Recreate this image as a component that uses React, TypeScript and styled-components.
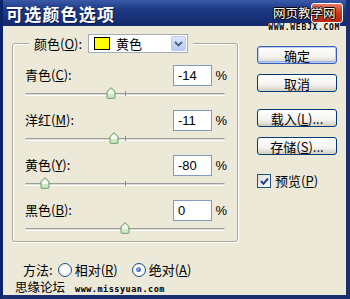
import React from 'react';
import styled, { createGlobalStyle } from 'styled-components';

const GlobalStyle = createGlobalStyle`
    html, body {
        margin: 0;
        padding: 0;
        background: #ece9d8;
    }
    body {
        font-family: "Liberation Sans", "Noto Sans CJK SC", sans-serif;
        font-size: 13px;
        color: #000;
    }
`;

const Window = styled.div`
    width: 350px;
    height: 299px;
    box-sizing: border-box;
    background: #ece9d8;
    border-left: 3px solid #0a246a;
    border-right: 4px solid #1a2f6e;
    border-bottom: 4px solid #1a2f6e;
    display: flex;
    flex-direction: column;
    position: relative;
    overflow: hidden;
`;

const TitleBar = styled.div`
    height: 26px;
    margin: 0 -4px 0 -3px;
    background: linear-gradient(180deg, #3a5aa8 0%, #1d3a86 35%, #14296b 100%);
    display: flex;
    align-items: center;
    padding-left: 6px;
    position: relative;
`;

const Title = styled.span`
    color: #fff;
    font-family: "Noto Sans CJK SC", sans-serif;
    font-weight: 700;
    font-size: 17px;
    letter-spacing: 1.2px;
    text-shadow: 1px 1px 0 #0a1a50;
`;

const CloseButton = styled.div`
    position: absolute;
    right: 7px;
    top: 3px;
    width: 30px;
    height: 18px;
    border-radius: 3px;
    border: 1px solid #fff;
    background: linear-gradient(180deg, #e8776a 0%, #d0341c 50%, #b8260e 100%);
`;

const Watermark = styled.div`
    position: absolute;
    right: 10px;
    top: 5px;
    display: flex;
    flex-direction: column;
    align-items: center;
    z-index: 2;
`;

const WatermarkTitle = styled.span`
    font-family: "Noto Sans CJK SC", sans-serif;
    font-size: 12.5px;
    line-height: 16px;
    color: #fff;
    text-shadow: 1px 0 0 #000, -1px 0 0 #000, 0 1px 0 #000, 0 -1px 0 #000;
`;

const WatermarkUrl = styled.span`
    font-family: "DejaVu Sans Mono", monospace;
    font-size: 8px;
    font-weight: 700;
    line-height: 9px;
    letter-spacing: 0.7px;
    color: #000;
    margin-top: 2px;
    background: #ece9d8;
`;

const Body = styled.div`
    flex: 1;
    display: flex;
    padding: 8px 0 0 9px;
    gap: 19px;
`;

const LeftColumn = styled.div`
    display: flex;
    flex-direction: column;
    width: 226px;
`;

const GroupBox = styled.div`
    margin-top: 9px;
    border: 1px solid #aca899;
    border-radius: 3px;
    box-shadow: 1px 1px 0 #fff inset, 1px 1px 0 #fff;
    height: 199px;
    position: relative;
    padding: 20px 12px 0 12px;
    box-sizing: border-box;
`;

const Legend = styled.div`
    position: absolute;
    top: -10px;
    left: 16px;
    display: flex;
    align-items: center;
    gap: 6px;
    padding: 0 5px;
    background: #ece9d8;
`;

const Label = styled.span`
    font-family: "Noto Sans CJK SC", sans-serif;
    font-size: 13px;
    line-height: 16px;
    white-space: nowrap;
`;

const Mnemonic = styled.span`
    text-decoration: underline;
    text-underline-offset: 1px;
`;

const Select = styled.div`
    width: 100px;
    height: 19px;
    border: 1px solid #a5acb5;
    background: #fff;
    display: flex;
    align-items: center;
    box-sizing: border-box;
    padding-left: 5px;
`;

const Swatch = styled.div<{ $color: string }>`
    width: 14px;
    height: 11px;
    border: 1px solid #000;
    background: ${p => p.$color};
    margin-right: 6px;
`;

const SelectText = styled.span`
    font-family: "Noto Sans CJK SC", sans-serif;
    font-size: 13px;
    flex: 1;
`;

const DropButton = styled.div`
    width: 15px;
    height: 15px;
    margin-right: 1px;
    border-radius: 2px;
    background: linear-gradient(180deg, #dbe5fc 0%, #b7c9f5 100%);
    border: 1px solid #b9cbf3;
    box-sizing: border-box;
    display: flex;
    align-items: center;
    justify-content: center;
`;

const Row = styled.div`
    display: flex;
    flex-direction: column;
    height: 45px;
`;

const RowTop = styled.div`
    display: flex;
    align-items: center;
    height: 22px;
`;

const Spacer = styled.div`
    flex: 1;
`;

const NumberInput = styled.div`
    width: 39px;
    height: 21px;
    box-sizing: border-box;
    border: 1px solid #7f9db9;
    background: #fff;
    display: flex;
    align-items: center;
    padding-left: 4px;
    font-family: "Liberation Sans", sans-serif;
    font-size: 13px;
`;

const Percent = styled.span`
    font-family: "Liberation Sans", sans-serif;
    font-size: 13px;
    width: 15px;
    text-align: right;
    margin-right: -2px;
`;

const Track = styled.div`
    position: relative;
    height: 3px;
    margin-top: 7px;
    width: 200px;
    border-top: 1px solid #9d9d9d;
    border-bottom: 1px solid #fff;
    background: #dcdcd4;
    border-radius: 2px;
    box-sizing: border-box;
`;

const Tick = styled.div`
    position: absolute;
    left: 100px;
    top: -3px;
    width: 1px;
    height: 5px;
    background: #8a8a8a;
`;

const Thumb = styled.svg`
    position: absolute;
    top: -7px;
    width: 10px;
    height: 12px;
    margin-left: -5px;
`;

const MethodRow = styled.div`
    display: flex;
    align-items: center;
    height: 15px;
    margin-top: 20px;
    padding-left: 11px;
    gap: 3px;
`;

const Radio = styled.div<{ $checked?: boolean }>`
    width: 12px;
    height: 12px;
    border-radius: 50%;
    border: 1px solid #1c5180;
    background: radial-gradient(circle, #fff 40%, #e0ded5 100%);
    display: flex;
    align-items: center;
    justify-content: center;
    margin-left: 2px;

    &::after {
        content: '';
        display: ${p => (p.$checked ? 'block' : 'none')};
        width: 5px;
        height: 5px;
        border-radius: 50%;
        background: radial-gradient(circle at 35% 35%, #8fa9e6, #2a4fbc);
    }
`;

const RadioLabel = styled(Label)`
    margin-right: 9px;
`;

const SiteRow = styled.div`
    display: flex;
    align-items: baseline;
    margin-left: 3px;
    margin-top: 2px;
    gap: 10px;
`;

const SiteName = styled.span`
    font-family: "Noto Sans CJK SC", sans-serif;
    font-size: 12.5px;
    line-height: 15px;
`;

const SiteUrl = styled.span`
    font-family: "DejaVu Sans Mono", monospace;
    font-size: 8.5px;
    font-weight: 700;
    letter-spacing: 0.5px;
`;

const RightColumn = styled.div`
    display: flex;
    flex-direction: column;
    padding-top: 12px;
    width: 80px;
`;

const Button = styled.div<{ $default?: boolean; $gap?: number }>`
    height: 18px;
    margin-top: ${p => p.$gap ?? 0}px;
    border: 1px solid ${p => (p.$default ? '#3c5eb4' : '#003c74')};
    border-radius: 3px;
    background: linear-gradient(180deg, #ffffff 0%, #f4f3ee 60%, #d6d0c5 100%);
    box-shadow: ${p => (p.$default ? 'inset 0 0 0 1px #b8ccf8, inset 0 -2px 0 #99b3ef' : 'inset 0 -2px 0 #d9d4c8')};
    display: flex;
    align-items: center;
    justify-content: center;
    font-family: "Noto Sans CJK SC", sans-serif;
    font-size: 13px;
    box-sizing: border-box;
`;

const CheckRow = styled.div`
    display: flex;
    align-items: center;
    gap: 4px;
    margin-top: 18px;
`;

const CheckBox = styled.div`
    width: 12px;
    height: 12px;
    border: 1px solid #1c5180;
    background: linear-gradient(135deg, #dcdcd6, #fff);
    display: flex;
    align-items: center;
    justify-content: center;
`;

const sliders = [
    { name: '青色', key: 'C', value: -14 },
    { name: '洋红', key: 'M', value: -11 },
    { name: '黄色', key: 'Y', value: -80 },
    { name: '黑色', key: 'B', value: 0 },
];

const ThumbIcon = ({ pos }: { pos: number }) => (
    <Thumb viewBox="0 0 10 12" style={{ left: `${pos}px` }}>
        <path d="M1 4.5 L5 0.7 L9 4.5 V10.5 Q9 11.3 8.2 11.3 H1.8 Q1 11.3 1 10.5 Z" fill="#cde8c6" stroke="#6f9a6a" strokeWidth="1" />
        <path d="M2 5 L5 2 L8 5 V7 H2 Z" fill="#f1fbef" />
    </Thumb>
);

export default function App() {
    return (
        <>
            <GlobalStyle />
            <Window>
                <TitleBar>
                    <Title>可选颜色选项</Title>
                    <CloseButton />
                    <Watermark>
                        <WatermarkTitle>网页教学网</WatermarkTitle>
                        <WatermarkUrl>WWW.WEBJX.COM</WatermarkUrl>
                    </Watermark>
                </TitleBar>
                <Body>
                    <LeftColumn>
                        <GroupBox>
                            <Legend>
                                <Label>
                                    颜色(<Mnemonic>O</Mnemonic>):
                                </Label>
                                <Select>
                                    <Swatch $color="#ffff00" />
                                    <SelectText>黄色</SelectText>
                                    <DropButton>
                                        <svg width="9" height="6" viewBox="0 0 9 6">
                                            <path d="M1 1 L4.5 4.5 L8 1" fill="none" stroke="#4d6185" strokeWidth="1.8" />
                                        </svg>
                                    </DropButton>
                                </Select>
                            </Legend>
                            {sliders.map(s => (
                                <Row key={s.key}>
                                    <RowTop>
                                        <Label>
                                            {s.name}(<Mnemonic>{s.key}</Mnemonic>):
                                        </Label>
                                        <Spacer />
                                        <NumberInput>{s.value}</NumberInput>
                                        <Percent>%</Percent>
                                    </RowTop>
                                    <Track>
                                        <Tick />
                                        <ThumbIcon pos={100 + s.value} />
                                    </Track>
                                </Row>
                            ))}
                        </GroupBox>
                        <MethodRow>
                            <Label>方法:</Label>
                            <Radio />
                            <RadioLabel>
                                相对(<Mnemonic>R</Mnemonic>)
                            </RadioLabel>
                            <Radio $checked />
                            <RadioLabel>
                                绝对(<Mnemonic>A</Mnemonic>)
                            </RadioLabel>
                        </MethodRow>
                        <SiteRow>
                            <SiteName>思缘论坛</SiteName>
                            <SiteUrl>www.missyuan.com</SiteUrl>
                        </SiteRow>
                    </LeftColumn>
                    <RightColumn>
                        <Button $default>确定</Button>
                        <Button $gap={10}>取消</Button>
                        <Button $gap={17}>
                            载入(<Mnemonic>L</Mnemonic>)...
                        </Button>
                        <Button $gap={10}>
                            存储(<Mnemonic>S</Mnemonic>)...
                        </Button>
                        <CheckRow>
                            <CheckBox>
                                <svg width="9" height="9" viewBox="0 0 9 9">
                                    <path d="M1 4 L3.5 6.8 L8 1.5" fill="none" stroke="#1f3c96" strokeWidth="2" />
                                </svg>
                            </CheckBox>
                            <Label>
                                预览(<Mnemonic>P</Mnemonic>)
                            </Label>
                        </CheckRow>
                    </RightColumn>
                </Body>
            </Window>
        </>
    );
}
